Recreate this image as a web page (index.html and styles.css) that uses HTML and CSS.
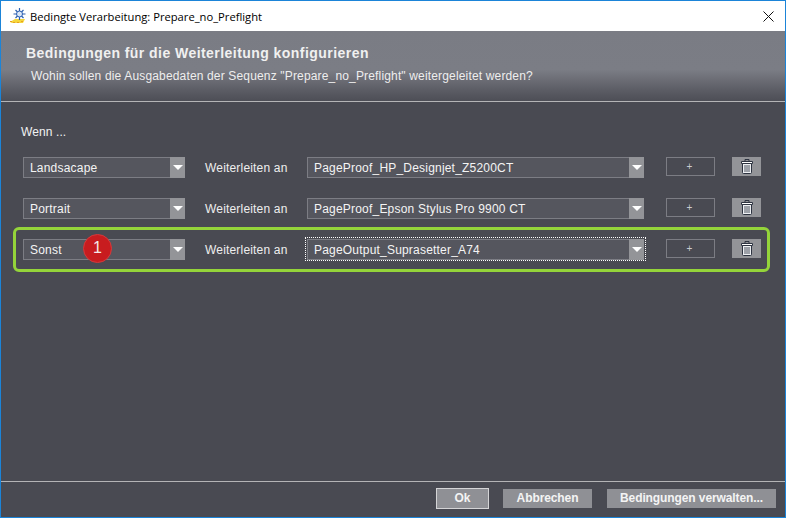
FILE: index.html
```html
<!DOCTYPE html>
<html lang="de">
<head>
<meta charset="utf-8">
<title>Bedingte Verarbeitung</title>
<link rel="stylesheet" href="styles.css">
</head>
<body>
<div class="window">
  <div class="titlebar">
    <svg class="app-icon" width="18" height="18" viewBox="0 0 18 18">
      <path d="M1 15 L6 12 H16 L14 16 H3 Z" fill="#f5d63c"/>
      <path d="M1 14h2v1H1zM4 15h2v1H4zM8 15h2v1H8zM12 14h2v1h-2z" fill="#e8a020"/>
      <g stroke="#2c5fb0" stroke-width="1.200">
        <path d="M10.500 1V13M4.500 7H16.500M6.500 3L14.500 11M14.500 3L6.500 11"/>
      </g>
      <circle cx="10.500" cy="7" r="3" fill="#dbe8fa" stroke="#2c5fb0"/>
    </svg>
    <span class="title-text">Bedingte Verarbeitung: Prepare_no_Preflight</span>
    <svg class="close" width="11" height="11" viewBox="0 0 11 11"><path d="M0.500 0.500L10.500 10.500M10.500 0.500L0.500 10.500" stroke="#111" stroke-width="1"/></svg>
  </div>
  <header class="banner">
    <h1 class="banner-title">Bedingungen für die Weiterleitung konfigurieren</h1>
    <p class="banner-sub">Wohin sollen die Ausgabedaten der Sequenz "Prepare_no_Preflight" weitergeleitet werden?</p>
  </header>
  <main class="content">
    <div class="wenn">Wenn ...</div>
    <div class="row">
      <div class="combo combo-cond"><span class="combo-value">Landsacape</span><span class="combo-arrow"><i class="tri"></i></span></div>
      <span class="fwd">Weiterleiten an</span>
      <div class="combo combo-target"><span class="combo-value">PageProof_HP_Designjet_Z5200CT</span><span class="combo-arrow"><i class="tri"></i></span></div>
      <button class="plus">+</button>
      <button class="trash"><svg width="12" height="15" viewBox="0 0 12 15"><path d="M4 2V0.500H8V2" fill="none" stroke="#2d3340" stroke-width="1"/><path d="M0.500 2.500H11.500V4.500H0.500Z" fill="#fff" stroke="#2d3340" stroke-width="1"/><path d="M1.500 4.500H10.500V13.500Q10.500 14.500 9.500 14.500H2.500Q1.500 14.500 1.500 13.500Z" fill="#eef0f3" stroke="#2d3340"/><path d="M4 6V13M6 6V13M8 6V13" stroke="#4a505c"/></svg></button>
    </div>
    <div class="row">
      <div class="combo combo-cond"><span class="combo-value">Portrait</span><span class="combo-arrow"><i class="tri"></i></span></div>
      <span class="fwd">Weiterleiten an</span>
      <div class="combo combo-target"><span class="combo-value">PageProof_Epson Stylus Pro 9900 CT</span><span class="combo-arrow"><i class="tri"></i></span></div>
      <button class="plus">+</button>
      <button class="trash"><svg width="12" height="15" viewBox="0 0 12 15"><path d="M4 2V0.500H8V2" fill="none" stroke="#2d3340" stroke-width="1"/><path d="M0.500 2.500H11.500V4.500H0.500Z" fill="#fff" stroke="#2d3340" stroke-width="1"/><path d="M1.500 4.500H10.500V13.500Q10.500 14.500 9.500 14.500H2.500Q1.500 14.500 1.500 13.500Z" fill="#eef0f3" stroke="#2d3340"/><path d="M4 6V13M6 6V13M8 6V13" stroke="#4a505c"/></svg></button>
    </div>
    <div class="row row-active">
      <div class="combo combo-cond"><span class="combo-value">Sonst</span><span class="combo-arrow"><i class="tri"></i></span><span class="badge">1</span></div>
      <span class="fwd">Weiterleiten an</span>
      <div class="combo combo-target combo-focus"><span class="combo-value">PageOutput_Suprasetter_A74</span><span class="combo-arrow"><i class="tri"></i></span></div>
      <button class="plus">+</button>
      <button class="trash"><svg width="12" height="15" viewBox="0 0 12 15"><path d="M4 2V0.500H8V2" fill="none" stroke="#2d3340" stroke-width="1"/><path d="M0.500 2.500H11.500V4.500H0.500Z" fill="#fff" stroke="#2d3340" stroke-width="1"/><path d="M1.500 4.500H10.500V13.500Q10.500 14.500 9.500 14.500H2.500Q1.500 14.500 1.500 13.500Z" fill="#eef0f3" stroke="#2d3340"/><path d="M4 6V13M6 6V13M8 6V13" stroke="#4a505c"/></svg></button>
    </div>
  </main>
  <footer class="footer">
    <button class="btn btn-default">Ok</button>
    <button class="btn btn-cancel">Abbrechen</button>
    <button class="btn btn-manage">Bedingungen verwalten...</button>
  </footer>
</div>
</body>
</html>
```
FILE: styles.css
```css
*, *::before, *::after { box-sizing: border-box; }
html, body { margin: 0; padding: 0; }
body { width: 786px; height: 518px; overflow: hidden; font-family: "Liberation Sans", Arial, sans-serif; }
.window { width: 786px; height: 518px; border: 1px solid #1b84d8; display: flex; flex-direction: column; background: #494a52; color: #fff; }

.titlebar { height: 30px; flex: none; background: #fff; display: flex; align-items: center; padding-left: 8px; color: #000; }
.app-icon { flex: none; margin-right: 3px; }
.title-text { font-family: "Open Sans", sans-serif; font-size: 11.2px; flex: 1; }
.close { margin-right: 11px; flex: none; }

.banner { height: 71px; flex: none; padding: 14px 0 0 25px; border-bottom: 1px solid #b4b4b6; background: linear-gradient(#7a7c84 0, #7b7d85 55%, #5b5c64 85%, #4d4e56 100%); }
.banner-title { margin: 0; font-size: 14px; line-height: 17px; font-weight: bold; color: #f0f0f0; letter-spacing: 0.45px; }
.banner-sub { margin: 7px 0 0 5px; font-size: 12px; line-height: 14px; color: #eeeeee; letter-spacing: 0.16px; }

.content { flex: 1; padding: 23px 0 0 12px; }
.wenn { font-size: 12px; line-height: 14px; color: #f2f2f2; padding-left: 8px; margin-bottom: 18px; letter-spacing: 0.1px; }

.row { display: flex; align-items: flex-start; height: 21px; padding-left: 10px; margin-bottom: 20px; position: relative; }
.row-active::before { content: ""; position: absolute; left: 0; top: -12px; width: 757px; height: 45px; border: 3px solid #94d43a; border-radius: 6px; pointer-events: none; }

.combo { height: 21px; flex: none; display: flex; border: 1px solid #7c7d84; border-right: 0; background: #55565e; position: relative; }
.combo-cond { width: 162px; }
.combo-target { width: 337px; }
.combo-focus::after { content: ""; position: absolute; left: -3px; top: -3px; right: -2px; bottom: -2px; border: 1px dotted #fff; pointer-events: none; }
.combo-value { flex: 1; font-size: 12px; line-height: 20px; padding-left: 6px; color: #f4f4f4; letter-spacing: 0.2px; white-space: nowrap; }
.combo-arrow { width: 15px; margin: -1px 0; background: #939498; display: flex; align-items: center; justify-content: center; flex: none; }
.tri { width: 0; height: 0; border-left: 5px solid transparent; border-right: 5px solid transparent; border-top: 5px solid #fff; }

.fwd { font-size: 12px; line-height: 22px; margin-left: 20px; width: 102px; flex: none; color: #eeeeee; letter-spacing: 0.18px; }

.plus { margin-left: 22px; width: 49px; height: 19px; flex: none; border: 1px solid #7c7d84; background: #494a52; color: #c8cad0; font: 10px/15px "Liberation Sans", Arial, sans-serif; padding: 0 2px 0 0; }
.trash { margin-left: 17px; width: 29px; height: 19px; flex: none; border: 0; background: #939498; padding: 0; display: flex; align-items: center; justify-content: center; }

.badge { position: absolute; left: 59px; top: -6px; width: 29px; height: 29px; border-radius: 50%; background: #c81c1f; border: 1px solid #d63a3c; color: #f4e8e8; font-size: 16px; line-height: 25px; text-align: center; }

.footer { height: 36px; flex: none; border-top: 1px solid #b4b4b6; display: flex; align-items: flex-start; padding: 7px 0 0 435px; }
.btn { height: 19px; border: 0; background: #8f9095; color: #f4f4f4; font: bold 12px/19px "Liberation Sans", Arial, sans-serif; padding: 0; flex: none; letter-spacing: -0.1px; }
.btn-default { width: 53px; height: 21px; margin-top: -1px; border: 1px solid #d4d4d6; }
.btn-cancel { width: 89px; margin-left: 14px; }
.btn-manage { width: 169px; margin-left: 15px; }
```
